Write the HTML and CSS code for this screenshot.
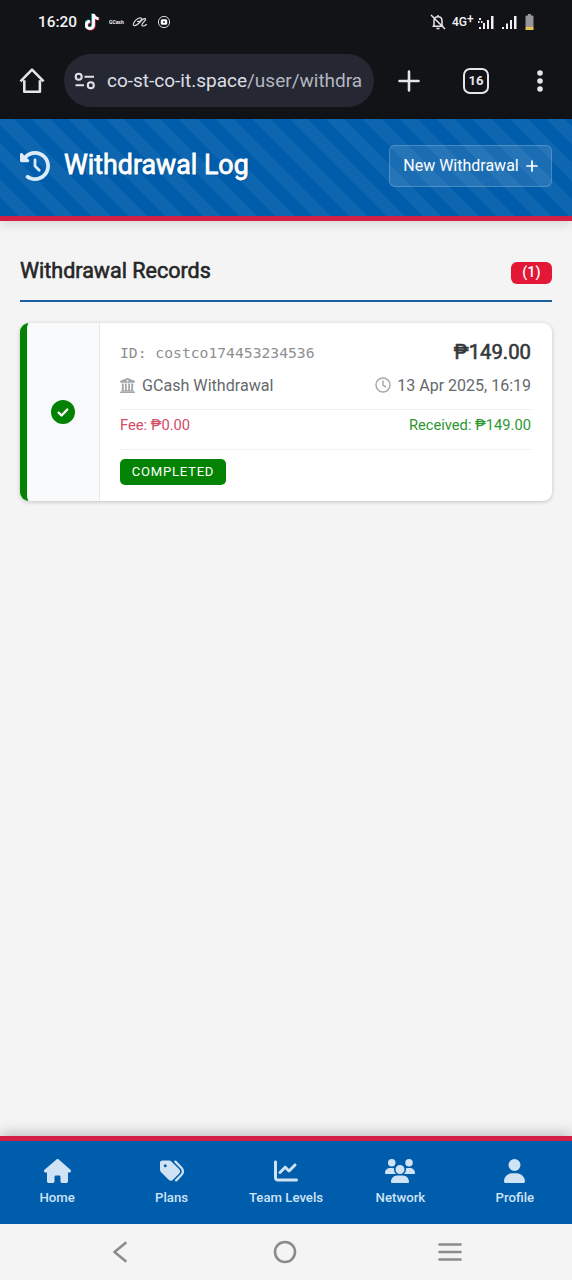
FILE: index.html
```html
<!DOCTYPE html>
<html lang="en">
<head>
<meta charset="utf-8">
<title>Withdrawal Log</title>
<link rel="stylesheet" href="styles.css">
</head>
<body>
<div class="screen">
  <div class="status">
    <span class="status-time">16:20</span>
    <svg class="st-tiktok" width="16" height="18" viewBox="0 0 16 18" fill="none" stroke-width="2.800"><path stroke="#25cfc8" d="M8 1v11a3.600 3.600 0 1 1-3.600-3.600M8 1.500c.5 2.500 2.500 4 5 4" transform="translate(-.3 -.4)"/><path stroke="#e83b5c" d="M9 1v11a3.600 3.600 0 1 1-3.600-3.600M9 1.500c.5 2.500 2.500 4 5 4" transform="translate(.2 .6)"/><path stroke="#fff" d="M8.500 1v11a3.600 3.600 0 1 1-3.600-3.600M8.500 1.500c.5 2.500 2.500 4 5 4"/></svg>
    <span class="st-gcash">GCash</span>
    <svg class="st-swirl" width="16" height="12" viewBox="0 0 16 12" fill="none" stroke="#d8d8da" stroke-width="1.200" stroke-linecap="round"><path d="M5.500 5.500c3 .3 5.500-3 3.500-3.500C5.500 1.200.5 6.800 1.500 9c1 2 5-1 7.500-4 2-2.300 5-3.500 4.500-1.500C13 5.500 9 8 10 9.500c.8.800 2.800.3 4.500-1"/></svg>
    <svg class="st-rec" width="14" height="14" viewBox="0 0 14 14"><circle cx="7" cy="7" r="5.600" fill="none" stroke="#d8d8da"/><rect x="3.800" y="4.200" width="6.400" height="5.600" rx="1.500" fill="#fff"/><circle cx="7" cy="7" r="1" fill="#33343a"/></svg>
    <span class="grow"></span>
    <svg class="st-bell" width="16" height="16" viewBox="0 0 16 16" fill="none" stroke="#e8e8ea" stroke-width="1.500"><path d="M4 12V7c0-2.500 1.500-4.200 4-4.200s4 1.700 4 4.200v5M2.500 12.200h11M8 1v2M6.500 14.500h3M1 1l14 14"/></svg>
    <span class="st-net">4G<sup>+</sup></span>
    <svg class="st-sig1" width="17" height="15" viewBox="0 0 17 15" fill="#f0f0f2"><path d="M1 3h2v2H1zM0 6h1.500v2H0zM3 6h1.500v2H3zM1 12h2v2H1zM5 8h2v6H5zM9 5h2v9H9zM13 1h2.500v13H13z"/></svg>
    <svg class="st-sig2" width="17" height="15" viewBox="0 0 17 15" fill="#f0f0f2"><path d="M1 12h2v2H1zM5 8.500h2V14H5zM9 5h2v9H9zM13 1h2.500v13H13z"/></svg>
    <svg class="st-batt" width="9" height="17" viewBox="0 0 9 17"><path fill="#96959a" d="M1.500 1.500H3V0h3v1.500h1.500q1 0 1 1V13H.5V2.500q0-1 1-1z"/><path fill="#e6c34b" d="M.5 13h8v3h-8z"/></svg>
  </div>
  <div class="browser">
    <svg class="home" width="26" height="28" viewBox="0 0 26 28" fill="none" stroke="#e4e5e9" stroke-width="2.600" stroke-linejoin="round"><path d="M5.300 13.200v11.500h15.600V13.200M1.500 14.300L13 2.700l11.600 11.600"/></svg>
    <div class="url">
      <svg width="22" height="18" viewBox="0 0 22 18" fill="none" stroke="#dfe1e7" stroke-width="2.100"><circle cx="4.700" cy="4.700" r="3"/><path d="M10.500 4.700H20M1.500 13.300H10"/><circle cx="16.800" cy="13.300" r="3"/></svg>
      <span class="url-text">co-st-co-it.space<i>/user/withdra</i></span>
    </div>
    <svg class="plus" width="22" height="22" viewBox="0 0 22 22" stroke="#e4e5e9" stroke-width="2.600" stroke-linecap="round"><path d="M11 1.500v19M1.500 11h19"/></svg>
    <span class="tabs">16</span>
    <svg class="dots" width="6" height="24" viewBox="0 0 6 24" fill="#e4e5e9"><circle cx="3" cy="4" r="2.800"/><circle cx="3" cy="12" r="2.800"/><circle cx="3" cy="20" r="2.800"/></svg>
  </div>

  <header class="header">
    <svg class="history" viewBox="0 0 512 512" fill="currentColor"><path d="M75 75L41 41C25.900 25.900 0 36.600 0 57.900V168c0 13.300 10.700 24 24 24H134.100c21.400 0 32.100-25.900 17-41l-30.800-30.800C155 85.500 203 64 256 64c106 0 192 86 192 192s-86 192-192 192c-40.800 0-78.600-12.700-109.700-34.400c-14.500-10.100-34.400-6.600-44.600 7.900s-6.600 34.400 7.900 44.600C151.200 495 201.700 512 256 512c141.400 0 256-114.600 256-256S397.400 0 256 0C185.300 0 121.300 28.700 75 75zm181 53c-13.300 0-24 10.700-24 24V256c0 6.400 2.500 12.500 7 17l72 72c9.400 9.400 24.600 9.400 33.900 0s9.400-24.600 0-33.900l-65-65V152c0-13.300-10.700-24-24-24z"/></svg>
    <h1 class="title">Withdrawal Log</h1>
    <a class="new">New Withdrawal <svg width="12" height="12" viewBox="0 0 12 12" stroke="#fff" stroke-width="1.700" stroke-linecap="round"><path d="M6 1v10M1 6h10"/></svg></a>
  </header>

  <main class="main">
    <div class="section-head"><h2 class="section-title">Withdrawal Records</h2><span class="count">(1)</span></div>
    <article class="card">
      <div class="card-side"><svg width="24" height="24" viewBox="0 0 24 24"><circle cx="12" cy="12" r="12" fill="#048204"/><path d="M7.600 12.600l3 2.900 5.700-6" fill="none" stroke="#fff" stroke-width="2.300" stroke-linecap="round" stroke-linejoin="round"/></svg></div>
      <div class="card-body">
        <div class="row row-id"><span class="txid">ID: costco174453234536</span><span class="amount">₱149.00</span></div>
        <div class="row row-method">
          <span class="meta"><svg width="15" height="15" viewBox="0 0 512 512" fill="#a3a7aa"><path d="M244 3L20 98q-20 12-20 34 0 28 28 28h456q28 0 28-28 0-22-20-34L268 3q-12-5-24 0zM64 190v230l-32 24q-10 8-10 20h468q0-12-10-20l-32-24V190h-64v226h-40V190h-64v226h-48V190h-64v226h-40V190zM16 470h480q16 6 16 22t-16 20H16q-16-4-16-20t16-22z"/><circle cx="256" cy="90" r="30" fill="#fff"/></svg>GCash Withdrawal</span>
          <span class="meta"><svg width="16" height="16" viewBox="0 0 16 16" fill="none" stroke="#a3a7aa" stroke-width="1.400" stroke-linecap="round"><circle cx="8" cy="8" r="7"/><path d="M8 4v4.200l2.600 1.700"/></svg>13 Apr 2025, 16:19</span>
        </div>
        <div class="row row-fee"><span class="fee">Fee: ₱0.00</span><span class="received">Received: ₱149.00</span></div>
        <div class="row-status"><span class="pill">COMPLETED</span></div>
      </div>
    </article>
  </main>

  <nav class="nav">
    <a class="tab"><svg height="24" viewBox="0 0 576 512"><path d="M575.800 255.500c0 18-15 32.100-32 32.100h-32l.7 160.200c0 2.700-.2 5.400-.5 8.100V472c0 22.100-17.900 40-40 40H392c-22.100 0-40-17.900-40-40V384c0-17.700-14.300-32-32-32H256c-17.700 0-32 14.300-32 32v88c0 22.100-17.900 40-40 40H104c-22.100 0-40-17.900-40-40V287.600H32c-18 0-32-14-32-32.100c0-9 3-17 10-24L266.400 8c7-7 15-8 22-8s15 2 21 7L564.800 231.500c8 7 12 15 11 24z"/></svg>Home</a>
    <a class="tab"><svg height="24" viewBox="0 0 512 512"><path fill-rule="evenodd" d="M345 39.100L472.800 168.400c52.400 53 52.400 138.200 0 191.200L360.800 472.900c-9.300 9.400-24.500 9.500-33.900 .2s-9.500-24.500-.2-33.900L438.600 325.900c33.900-34.300 33.900-89.400 0-123.700L310.900 72.900c-9.300-9.400-9.200-24.600 .2-33.900s24.600-9.200 33.900 .2zM0 229.500V80C0 53.500 21.500 32 48 32H197.500c17 0 33.300 6.700 45.300 18.700l168 168c25 25 25 65.500 0 90.500L277.300 442.700c-25 25-65.500 25-90.500 0l-168-168C6.700 262.700 0 246.500 0 229.500zM144 144a32 32 0 1 0 -64 0 32 32 0 1 0 64 0z"/></svg>Plans</a>
    <a class="tab"><svg height="24" viewBox="0 0 512 512"><path d="M64 64c0-17.700-14.300-32-32-32S0 46.300 0 64V400c0 44.200 35.800 80 80 80H480c17.700 0 32-14.300 32-32s-14.300-32-32-32H80c-8.800 0-16-7.200-16-16V64zm406.600 86.600c12.500-12.500 12.500-32.800 0-45.300s-32.800-12.500-45.300 0L320 210.700l-57.400-57.400c-12.500-12.500-32.800-12.500-45.300 0l-112 112c-12.500 12.500-12.500 32.800 0 45.300s32.800 12.500 45.300 0L240 221.300l57.400 57.400c12.500 12.500 32.800 12.500 45.300 0l128-128z"/></svg>Team Levels</a>
    <a class="tab"><svg height="24" viewBox="0 0 640 512"><path d="M144 0a80 80 0 1 1 0 160A80 80 0 1 1 144 0zM512 0a80 80 0 1 1 0 160A80 80 0 1 1 512 0zM0 298.700C0 239.800 47.800 192 106.700 192h42.700c15.900 0 31 3.500 44.600 9.700c-1.300 7.200-1.900 14.700-1.900 22.300c0 38.200 16.800 72.500 43.300 96H21.300C9.600 320 0 310.400 0 298.700zM404.600 320c26.600-23.500 43.300-57.800 43.300-96c0-7.600-.7-15-1.900-22.300c13.600-6.300 28.700-9.700 44.600-9.700h42.700C592.200 192 640 239.800 640 298.700c0 11.800-9.600 21.300-21.300 21.300H404.600zM224 224a96 96 0 1 1 192 0 96 96 0 1 1 -192 0zM128 485.300C128 411.700 187.700 352 261.300 352H378.700C452.300 352 512 411.700 512 485.300c0 14.700-11.900 26.700-26.700 26.700H154.700c-14.700 0-26.700-11.900-26.700-26.700z"/></svg>Network</a>
    <a class="tab"><svg height="24" viewBox="0 0 448 512"><path d="M224 256A128 128 0 1 0 224 0a128 128 0 1 0 0 256zm-45.700 48C79.800 304 0 383.800 0 482.300C0 498.700 13.300 512 29.700 512H418.300c16.400 0 29.700-13.300 29.700-29.700C448 383.800 368.200 304 269.700 304H178.300z"/></svg>Profile</a>
  </nav>
  <div class="system">
    <svg width="16" height="24" viewBox="0 0 16 24"><path d="M13.500 3L2.500 12l11 9"/></svg>
    <svg class="sys-home" width="26" height="26" viewBox="0 0 26 26"><circle cx="13" cy="13" r="10"/></svg>
    <svg width="26" height="24" viewBox="0 0 26 24"><path d="M2.500 4.500h21M2.500 12h21M2.500 19.500h21"/></svg>
  </div>
</div>
</body>
</html>
```
FILE: styles.css
```css
* { box-sizing: border-box; }
body { margin: 0; font-family: Roboto, "Noto Sans", sans-serif; background: #f4f4f4; }
h1, h2 { margin: 0; font-weight: 400; }
svg { flex: none; display: block; }
.screen { width: 572px; height: 1280px; display: flex; flex-direction: column; overflow: hidden; }
.grow { flex: 1; }

.status { height: 44px; flex: none; background: #121317; color: #f2f2f4; display: flex; align-items: center; padding: 0 38px 0 38px; }
.status-time { width: 47px; font-size: 15.400px; font-weight: 500; white-space: nowrap; }
.st-tiktok { margin-right: 8px; }
.st-gcash { width: 15px; font-size: 5px; font-weight: 700; margin-right: 8px; }
.st-swirl { margin-right: 9px; }
.st-net { font-size: 12px; font-weight: 500; margin: 0 4px 0 6px; width: 22px; white-space: nowrap; }
.st-net sup { font-size: 12px; line-height: 0; vertical-align: 3px; }
.st-sig1 { margin-right: 6px; }
.st-sig2 { margin-right: 7px; }

.browser { height: 75px; flex: none; background: #121317; display: flex; align-items: center; padding: 0 29px 2px 19px; }
.url { margin-left: 19px; width: 310px; height: 53px; border-radius: 27px; background: #252832; display: flex; align-items: center; padding-left: 10px; gap: 11px; }
.url-text { font-size: 19px; color: #dddfe6; white-space: nowrap; }
.url-text i { font-style: normal; color: #b3b6c0; }
.plus { margin-left: 24px; }
.tabs { margin-left: 43px; width: 26px; height: 26px; border: 2.500px solid #e4e5e9; border-radius: 7px; color: #e4e5e9; font-size: 13px; font-weight: 700; line-height: 21px; text-align: center; }
.dots { margin-left: auto; }

.header {
  height: 102px; flex: none; display: flex; align-items: center; padding: 0 20px 4px;
  border-bottom: 5px solid #d31f45; color: #fff;
  background: repeating-linear-gradient(45deg, transparent 0 13px, rgba(255,255,255,.055) 13px 26px) #005dab;
  box-shadow: 0 3px 10px rgba(0,0,0,.12);
}
.history { width: 30px; height: 30px; color: #dcebf8; }
.title { margin: -2px 0 0 14px; font-size: 26.800px; line-height: 34px; -webkit-text-stroke: .8px #fff; text-shadow: 1px 1px 2px rgba(0,0,0,.2); white-space: nowrap; }
.new { margin-left: auto; width: 163px; height: 42px; border: 1px solid rgba(255,255,255,.2); border-radius: 6px; background: rgba(255,255,255,.1); display: flex; align-items: center; justify-content: center; gap: 7px; font-size: 16px; white-space: nowrap; }

.main { flex: 1; padding: 28px 20px 0; }
.section-head { display: flex; justify-content: space-between; height: 53px; border-bottom: 2px solid #1a5f9f; }
.section-title { font-size: 21.500px; line-height: 43px; color: #252627; -webkit-text-stroke: .6px #252627; white-space: nowrap; }
.count { margin-top: 13px; width: 41px; height: 22px; border-radius: 6px; background: #e31837; color: #fff; font-size: 14.500px; font-weight: 500; line-height: 22px; text-align: center; }
.card { margin-top: 21px; height: 178px; display: flex; background: #fff; border-left: 7px solid #048204; border-radius: 9px; box-shadow: 0 1px 4px rgba(0,0,0,.2); overflow: hidden; }
.card-side { width: 73px; flex: none; background: #f8fafc; border-right: 1px solid #e8eaec; display: flex; align-items: center; justify-content: center; }
.card-body { flex: 1; padding: 13px 20px 0; }
.row { display: flex; justify-content: space-between; align-items: center; white-space: nowrap; padding-right: 1px; }
.row-id { height: 32px; }
.txid { font-family: "DejaVu Sans Mono", monospace; font-size: 14.700px; color: #8d9092; }
.amount { font-size: 20.300px; color: #35383b; -webkit-text-stroke: .6px #35383b; }
.row-method { height: 42px; padding-bottom: 7px; border-bottom: 1px solid #f0f1f1; color: #65696c; font-size: 16.100px; }
.meta { display: flex; align-items: center; gap: 7px; }
.meta + .meta { font-size: 16px; gap: 6px; }
.row-fee { height: 40px; padding-bottom: 9px; border-bottom: 1px dotted #e4e6e7; font-size: 14.700px; }
.fee { color: #d24a66; }
.received { color: #2d972f; }
.row-status { padding-top: 9px; }
.pill { display: block; width: 106px; height: 26px; border-radius: 5px; background: #048204; color: #fff; font-size: 13.100px; letter-spacing: .75px; line-height: 25px; text-align: center; }

.nav { height: 88px; flex: none; display: grid; grid-template-columns: repeat(5, 1fr); background: #005dab; border-top: 5px solid #d31f45; box-shadow: 0 -3px 12px rgba(0,0,0,.22); }
.tab { display: flex; flex-direction: column; align-items: center; padding-top: 18px; gap: 7px; font-size: 13.200px; line-height: 16px; font-weight: 500; color: #cfe3f5; white-space: nowrap; }
.tab svg { fill: currentColor; }
.system { height: 56px; flex: none; display: flex; align-items: center; justify-content: space-between; padding: 0 109px 0 112px; background: #f4f4f4; }
.system svg { fill: none; stroke: #8b8b8b; stroke-width: 2.600; stroke-linecap: round; stroke-linejoin: round; }
.system .sys-home { margin-left: 5px; }
```
